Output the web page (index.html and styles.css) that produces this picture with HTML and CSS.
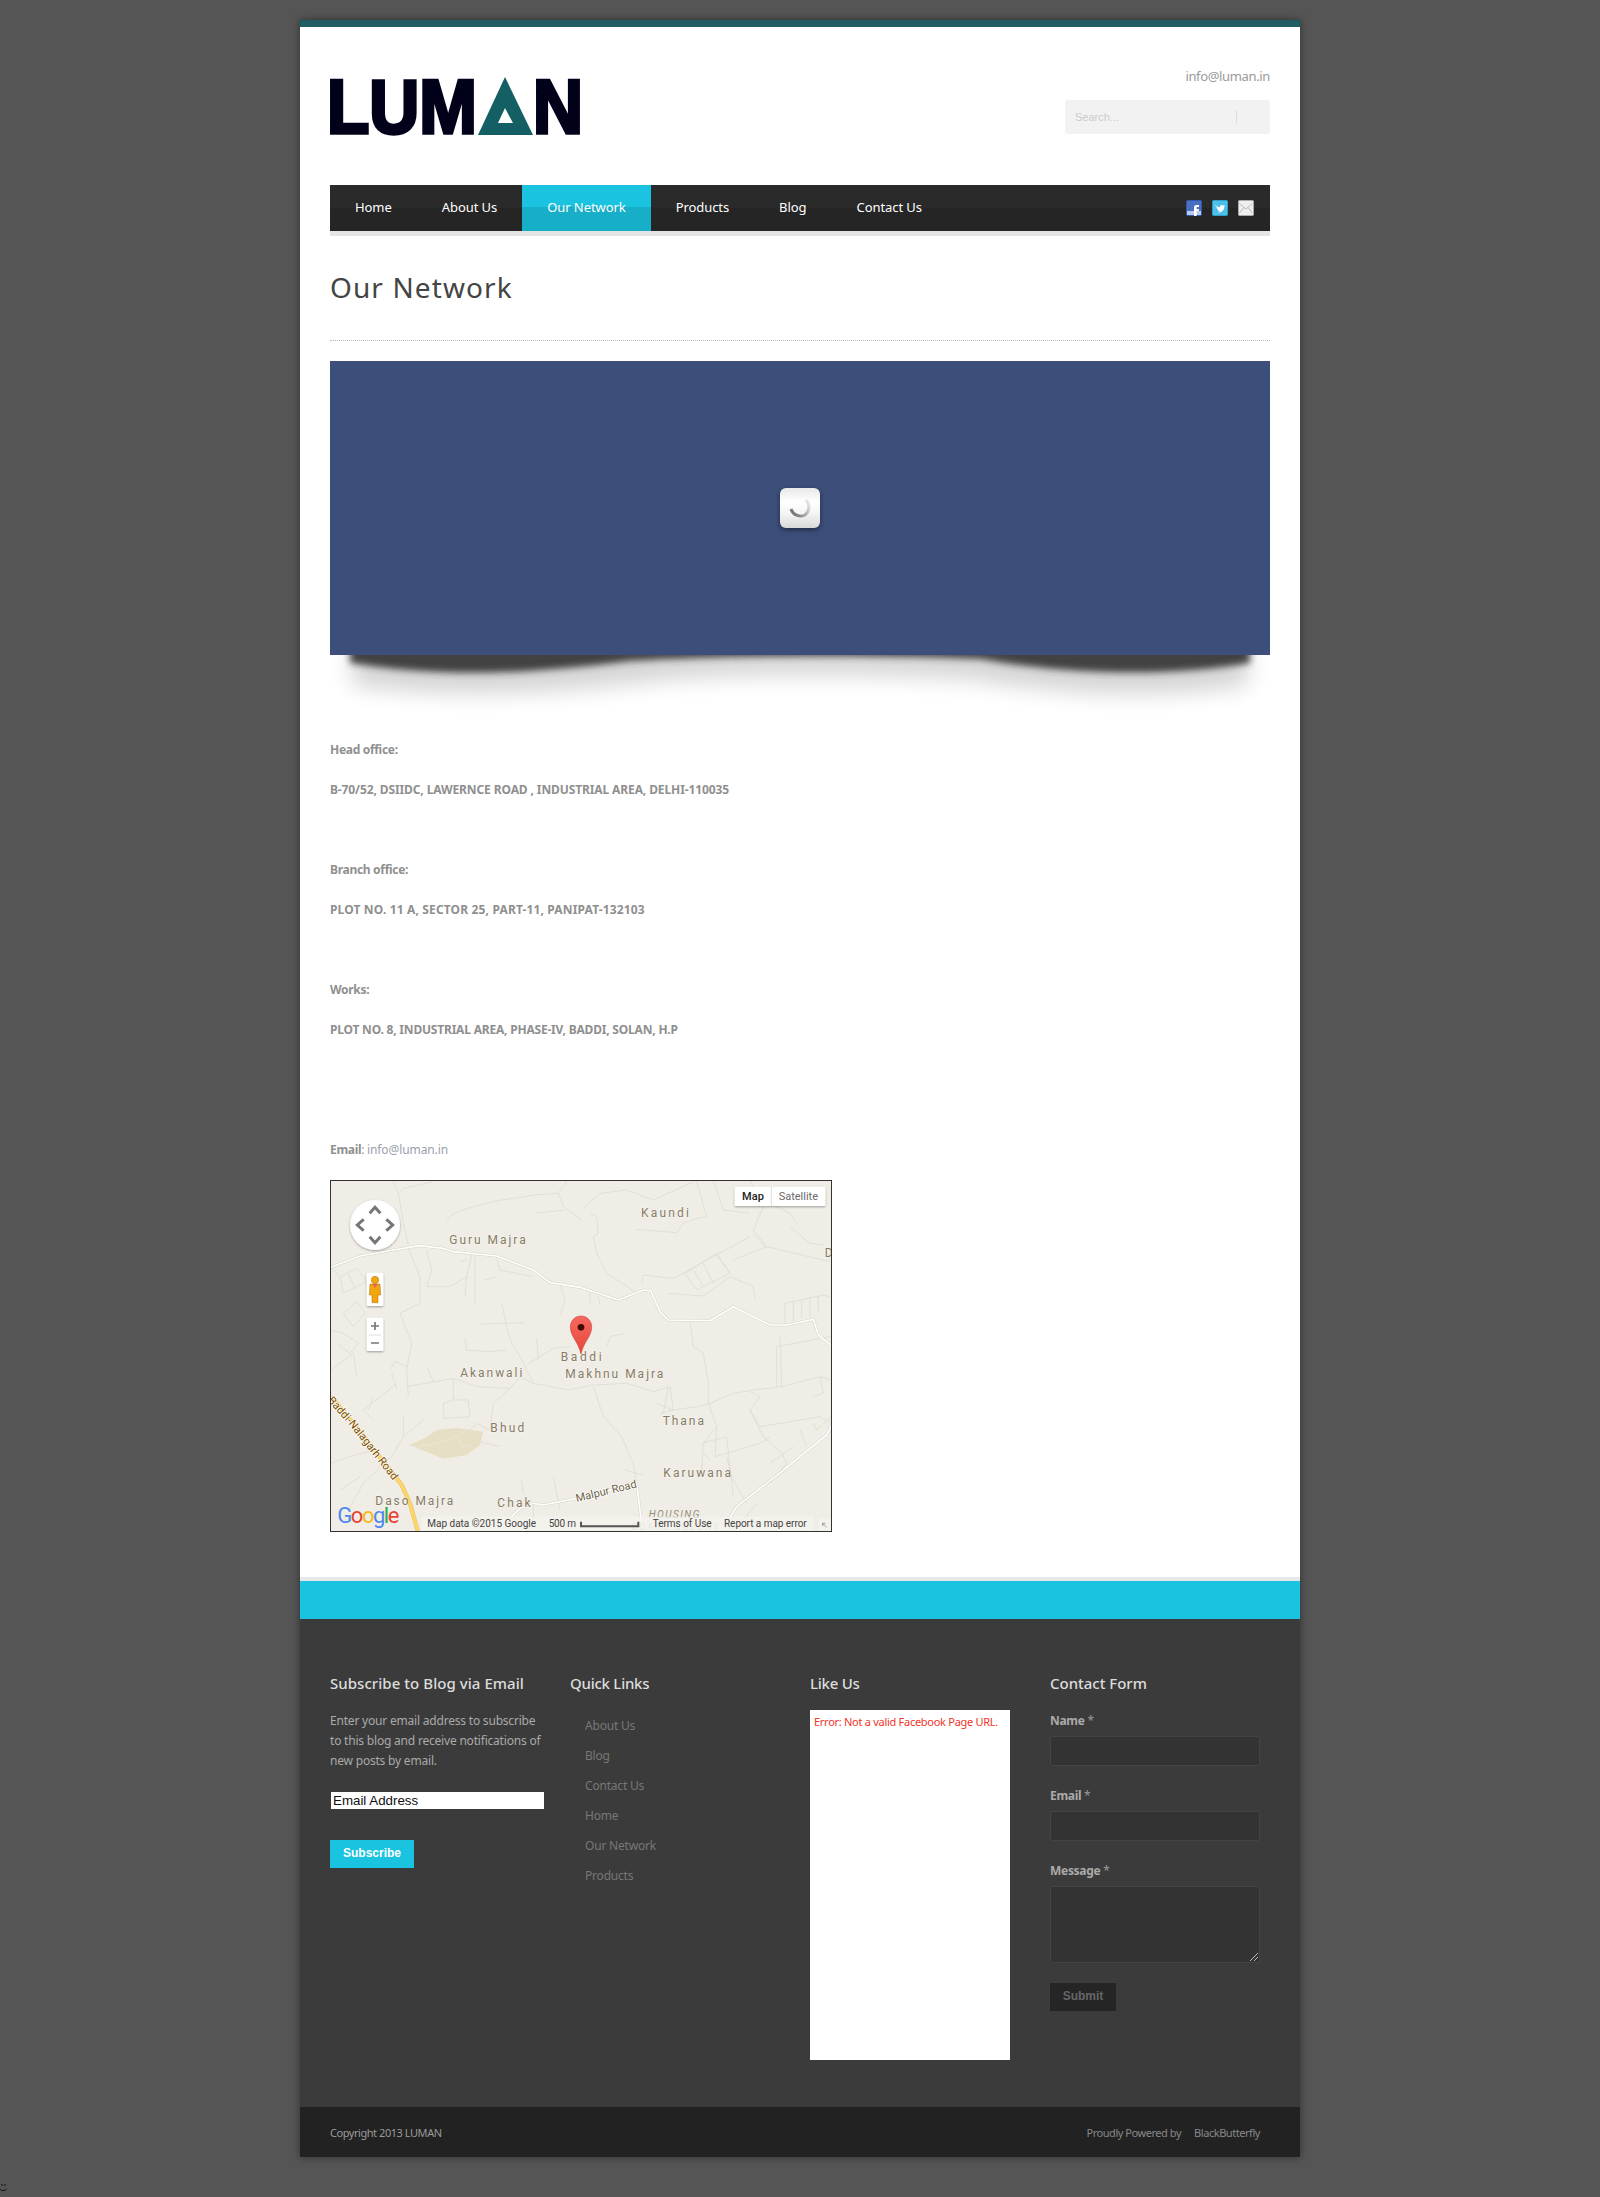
FILE: index.html
```html
<!DOCTYPE html>
<html lang="en">
<head>
<meta charset="utf-8">
<title>Our Network | LUMAN</title>
<link rel="stylesheet" href="styles.css">
</head>
<body>
<div class="page">
  <header class="head">
    <svg class="logo" width="250" height="60" viewBox="0 0 250 60" role="img" aria-label="LUMAN">
      <text class="logo-text" x="-3" y="56" textLength="150" lengthAdjust="spacingAndGlyphs">LUM</text>
      <polygon class="logo-a" points="175,0 148,58 203,58"/>
      <polygon class="logo-hole" points="175,31 168,46 183,46"/>
      <text class="logo-text" x="203" y="56" textLength="50" lengthAdjust="spacingAndGlyphs">N</text>
    </svg>
    <div class="head-right">
      <a class="head-mail">info@luman.in</a>
      <div class="search"><span class="search-ph">Search...</span><span class="search-div"></span></div>
    </div>
  </header>

  <nav class="nav">
    <ul class="menu">
      <li class="menu-item">Home</li>
      <li class="menu-item">About Us</li>
      <li class="menu-item active">Our Network</li>
      <li class="menu-item">Products</li>
      <li class="menu-item">Blog</li>
      <li class="menu-item">Contact Us</li>
    </ul>
    <div class="social">
      <svg width="16" height="16" viewBox="0 0 16 16"><rect x=".5" y=".5" width="15" height="15" rx="1" fill="#4a6fc0" stroke="#3558a8"/><rect x="1" y="11" width="14" height="4" fill="#b9c8ea"/><path d="M8 16V7.800c0-1.900 1-2.800 2.600-2.800H13v2h-1.400c-.7 0-1 .3-1 1V9H13l-.3 2h-2.100v5z" fill="#fff"/></svg>
      <svg width="16" height="16" viewBox="0 0 16 16"><rect x=".5" y=".5" width="15" height="15" rx="1" fill="#4cc0ea" stroke="#2f9fc8"/><path d="M3 4.500c1.500 1.800 3 2.600 5 2.700-.3-1.700 1.900-2.900 3.200-1.600l1.500-.5-.8 1.200 1.200-.2-1 1.100c0 3.300-3.400 6.100-6.900 4.900 1 0 1.900-.3 2.500-.9-1.100 0-1.800-.6-2.100-1.400h1C5.400 9.400 4.600 8.500 4.600 7.500l.9.200C4.200 6.800 3.200 5.700 3 4.500z" fill="#fff"/></svg>
      <svg width="16" height="16" viewBox="0 0 16 16"><rect x=".5" y=".5" width="15" height="15" rx="1" fill="#eee" stroke="#aaa"/><path d="M1.500 3.500 8 9l6.500-5.500M1.500 13 6 7.500M14.500 13 10 7.500" fill="none" stroke="#bbb"/></svg>
    </div>
  </nav>
  <div class="nav-strip"></div>

  <main class="main">
    <h1 class="title">Our Network</h1>
    <div class="slider">
      <div class="loader">
        <svg width="40" height="40" viewBox="0 0 40 40">
          <defs><linearGradient id="spin" x1="1" y1="0" x2="0" y2="0.6"><stop offset="0" stop-color="#eee"/><stop offset="1" stop-color="#777"/></linearGradient></defs>
          <path d="M26 12a10 10 0 0 1-1 15 10 10 0 0 1-14-6" fill="none" stroke="url(#spin)" stroke-width="3"/>
        </svg>
      </div>
    </div>
    <svg class="slider-shadow" width="940" height="85" viewBox="0 0 940 85" aria-hidden="true">
      <defs>
        <filter id="b1" x="-5%" y="-50%" width="110%" height="200%"><feGaussianBlur stdDeviation="3.500"/></filter>
        <filter id="b2" x="-5%" y="-100%" width="110%" height="300%"><feGaussianBlur stdDeviation="11"/></filter>
      </defs>
      <path d="M22 -10V30C130 44 230 38 340 24 430 18 530 18 640 24 740 40 830 44 918 30V-10Z" fill="#000" opacity=".17" filter="url(#b2)"/>
      <path d="M20 -10V8C110 22 190 20 300 6 400 0 550 0 650 4 740 20 840 22 920 8V-10Z" fill="#333" opacity=".9" filter="url(#b1)"/>
    </svg>
    <div class="content">
      <p class="line"><strong>Head office:</strong></p>
      <p class="line addr-a"><strong>B-70/52, DSIIDC, LAWERNCE ROAD , INDUSTRIAL AREA, DELHI-110035</strong></p>
      <p class="line gap"><strong>Branch office:</strong></p>
      <p class="line addr-b"><strong>PLOT NO. 11 A, SECTOR 25, PART-11, PANIPAT-132103</strong></p>
      <p class="line gap"><strong>Works:</strong></p>
      <p class="line addr-c"><strong>PLOT NO. 8, INDUSTRIAL AREA, PHASE-IV, BADDI, SOLAN, H.P</strong></p>
      <p class="line gap-lg"><strong>Email</strong>: <a class="link">info@luman.in</a></p>
    </div>

    <div class="map">
      <svg class="map-svg" width="500" height="350" viewBox="33 33 1500 1050" role="img" aria-label="Map of Baddi">
        <defs>
          <filter id="sh" x="-20%" y="-20%" width="140%" height="140%"><feDropShadow dx="0" dy="3" stdDeviation="3" flood-opacity=".35"/></filter>
          <linearGradient id="pin" x1="0" y1="0" x2="0" y2="1"><stop offset="0" stop-color="#f7685e"/><stop offset="1" stop-color="#e5473c"/></linearGradient>
          <path id="roadlabel" d="M22 692 92 770 238 956"/>
          <path id="malpur" d="M770 996 952 952"/>
        </defs>
        <rect x="33" y="33" width="1500" height="1050" fill="#efede5"/>
        <path class="park" d="M268 825 320 802 350 780 410 774 490 785 480 825 440 855 370 866 330 850Z"/>
        <path class="park-line" d="M270 830C330 830 400 810 440 780M415 800 425 830 450 825"/>
        <g class="minor">
          <path d="M220 33 235 70 250 160 265 225M340 35 250 55 235 70"/>
          <path d="M380 150C400 120 470 110 520 95 560 85 600 85 640 75L715 70 730 110 785 150M740 33 715 70M645 130 730 120"/>
          <path d="M810 130 830 140 835 190 820 200 830 250 860 310 945 365M790 115 840 70 920 60 1000 90 1125 33"/>
          <path d="M950 178 1070 188 1090 160 1130 145 1160 140 1130 33M1290 33 1330 110 1300 180 1340 230M1180 33 1210 120 1290 130M1350 100 1410 130 1430 160M1410 170 1470 220 1510 225"/>
          <path d="M1290 200 1060 325 970 315 965 340M1300 190 1340 235M1095 310 1130 360 1230 310 1190 250 1095 310M1120 300 1150 350M1150 280 1180 340M1190 255 1230 310M1045 370 1150 378 1230 320 1300 350 1305 385M1240 270 1340 230 1530 275"/>
          <path d="M1395 460V400L1510 375 1530 380M1420 455V395M1445 445V390M1470 440V382M1495 425V378"/>
          <path d="M33 292 60 320 70 370 140 335 110 295 60 320M85 310 105 355M265 235 300 320 300 400 240 430 275 520 260 600 265 680M155 370 140 370M70 430 110 395 135 430 100 470 70 430M33 480 70 490 115 520 90 550 50 520M320 240 335 300 320 350 390 350 440 320 455 255M440 320 435 380M420 275 440 270M495 330 530 320M465 255 465 400"/>
          <path d="M530 265 540 300 640 320M720 345 735 390 720 435M810 365 810 400M835 380 840 405M545 400 560 470 575 520 600 560 640 640 745 660 820 645 920 640 1000 665 1050 650 1060 720 1130 710 1170 700 1240 670 1300 660 1385 650 1500 620 1533 630M480 462 615 458M435 505 440 540 510 545 560 540M620 585 700 535 750 530M650 505 655 570M860 530 870 500 915 490M820 650 850 740 905 800 940 880 950 940M1110 455 1120 530 1150 550 1165 640 1165 700 1190 770 1185 860"/>
          <path d="M1370 650 1370 530 1533 500M1500 620 1510 670 1480 680M1380 500 1385 650M1290 665 1320 680 1290 720 1330 800 1385 850 1400 880 1350 940M1290 720 1320 770 1440 750 1500 740 1533 760M1190 770 1150 820 1145 900M1185 860 1320 820 1350 800M1145 820 1220 800 1240 980M1150 850 1170 870M1220 860 1235 920 1280 1000M1350 880 1420 830M1440 780 1460 830M1480 760 1490 780 1533 740M1310 1000 1270 1050"/>
          <path d="M33 600 100 550 110 620M210 600 225 575 265 590M215 610 230 660M320 590 340 635M260 650 400 625 470 650 570 655 600 620 640 640M400 625 400 690 370 700 372 745 450 740 445 690 400 690M570 655 520 700 510 780 470 760 440 790M540 830 480 815M33 880 90 860 160 840M230 640 130 720 160 750M250 740 250 800 215 860 130 940 85 1020M250 800 310 750M60 960 120 920M160 680 145 720"/>
          <path d="M700 920 720 1020M605 930 610 970M640 1000 640 1050M915 900 950 910 970 915M1010 700 1060 720 1020 730M1045 650 1030 730"/>
        </g>
        <g class="mainroad-edge">
          <path d="M33 292 120 258 220 240 298 227 370 235 400 245 530 258 640 300 690 338 780 352 895 390 970 360 992 362 1020 425 1045 450 1170 452 1240 410 1350 465 1400 465 1480 448 1495 495 1533 525"/>
          <path d="M1533 770 1520 795 1385 905 1250 1010 1225 1050"/>
          <path d="M560 1055 600 1015 640 1000 670 1005 770 985 950 940 965 1060"/>
        </g>
        <g class="mainroad">
          <path d="M33 292 120 258 220 240 298 227 370 235 400 245 530 258 640 300 690 338 780 352 895 390 970 360 992 362 1020 425 1045 450 1170 452 1240 410 1350 465 1400 465 1480 448 1495 495 1533 525"/>
          <path d="M1533 770 1520 795 1385 905 1250 1010 1225 1050"/>
          <path d="M560 1055 600 1015 640 1000 670 1005 770 985 950 940 965 1060"/>
        </g>
        <path class="yellow-edge" d="M33 680 100 760 245 945 270 1000 295 1090"/>
        <path class="yellow" d="M33 680 100 760 245 945 270 1000 295 1090"/>
        <text class="road-text"><textPath href="#roadlabel">Baddi-Nalagarh Road</textPath></text>
        <text class="road-text road-plain"><textPath href="#malpur">Malpur Road</textPath></text>

        <text class="place" x="963" y="140" textLength="144">Kaundi</text>
        <text class="place" x="388" y="223" textLength="229">Guru Majra</text>
        <text class="place" x="1514" y="262">D</text>
        <text class="place" x="421" y="620" textLength="186">Akanwali</text>
        <text class="place" x="722" y="573" textLength="123">Baddi</text>
        <text class="place" x="736" y="625" textLength="294">Makhnu Majra</text>
        <text class="place" x="511" y="785" textLength="102">Bhud</text>
        <text class="place" x="1028" y="764" textLength="124">Thana</text>
        <text class="place" x="1030" y="920" textLength="203">Karuwana</text>
        <text class="place" x="166" y="1004" textLength="234">Daso Majra</text>
        <text class="place" x="532" y="1010" textLength="100">Chak</text>
        <text class="housing" x="986" y="1043" textLength="152">HOUSING</text>
        <text class="housing-faint" x="935" y="1080" textLength="260">BOARD COLONY</text>

        <path class="pin" d="M783 552C775 515 751 500 751 471 751 452 765 438 783 438S815 452 815 471C815 500 791 515 783 552Z"/>
        <circle class="pin-dot" cx="783" cy="472" r="10"/>

        <circle class="ctl" cx="165" cy="165" r="75" filter="url(#sh)"/>
        <path class="chev" d="M149 130 165 112 181 130M131 148 112 165 131 182M199 148 218 165 199 182M149 200 165 218 181 200"/>
        <rect class="ctl" x="140" y="308" width="50" height="100" rx="4" filter="url(#sh)"/>
        <circle class="peg" cx="165" cy="330" r="11"/>
        <path class="peg" d="M150 342H180L182 375 174 375 174 398H156L156 375 148 375Z"/>
        <path class="peg-v" d="M156 342H174L165 354Z"/>
        <rect class="ctl" x="140" y="443" width="50" height="100" rx="4" filter="url(#sh)"/>
        <path class="zoom-line" d="M146 495H184"/>
        <path class="chev-thin" d="M153 468H177M165 456V480M153 519H177"/>

        <rect class="ctl" x="1244" y="50" width="272" height="58" rx="3" filter="url(#sh)"/>
        <path class="zoom-line" d="M1354 50V108"/>
        <text class="map-btn strong" x="1266" y="90" textLength="66">Map</text>
        <text class="map-btn" x="1376" y="89" textLength="118">Satellite</text>

        <rect class="attr-bg" x="305" y="1040" width="1175" height="43"/>
        <rect class="attr-bg" x="1495" y="1045" width="38" height="38"/>
        <text class="attr" x="322" y="1072" textLength="326">Map data ©2015 Google</text>
        <text class="attr" x="686" y="1072" textLength="82">500 m</text>
        <path class="scale" d="M783 1055V1069H955V1055"/>
        <text class="attr" x="998" y="1072" textLength="177">Terms of Use</text>
        <text class="attr" x="1212" y="1072" textLength="248">Report a map error</text>
        <path class="corner" d="M1520 1072 1508 1060M1508 1068V1060H1516"/>

        <text class="goog" x="52" y="1058" textLength="186"><tspan class="g-b">G</tspan><tspan class="g-r">o</tspan><tspan class="g-y">o</tspan><tspan class="g-b">g</tspan><tspan class="g-g">l</tspan><tspan class="g-r">e</tspan></text>
      </svg>
    </div>
  </main>

  <div class="band"></div>

  <footer class="foot">
    <section class="col">
      <h3 class="foot-h wide">Subscribe to Blog via Email</h3>
      <p class="foot-p">Enter your email address to subscribe<br>to this blog and receive notifications of<br>new posts by email.</p>
      <div class="sub-input">Email Address</div>
      <div class="sub-btn">Subscribe</div>
    </section>
    <section class="col">
      <h3 class="foot-h">Quick Links</h3>
      <ul class="links">
        <li>About Us</li>
        <li>Blog</li>
        <li>Contact Us</li>
        <li>Home</li>
        <li>Our Network</li>
        <li>Products</li>
      </ul>
    </section>
    <section class="col">
      <h3 class="foot-h">Like Us</h3>
      <div class="fb-box">Error: Not a valid Facebook Page URL.</div>
    </section>
    <section class="col">
      <h3 class="foot-h wider">Contact Form</h3>
      <div class="form">
        <label class="lbl">Name <span class="req">*</span></label>
        <div class="field"></div>
        <label class="lbl">Email <span class="req">*</span></label>
        <div class="field"></div>
        <label class="lbl">Message <span class="req">*</span></label>
        <div class="field area">
          <svg class="grip" width="8" height="8" viewBox="0 0 8 8"><path d="M0 8 8 0M4 8 8 4" stroke="#bbb" fill="none"/></svg>
        </div>
        <div class="submit">Submit</div>
      </div>
    </section>
  </footer>

  <div class="copy">
    <span class="copy-left">Copyright 2013 LUMAN</span>
    <span class="copy-right"><span>Proudly Powered by</span><span>BlackButterfly</span></span>
  </div>
</div>
<svg class="smiley" width="7" height="8" viewBox="0 0 7 8" aria-hidden="true"><path d="M2 0V2M5 0V2M0 5C1 7 5 7 6.500 5" fill="none" stroke="#111"/></svg>
</body>
</html>
```
FILE: styles.css
```css
* { box-sizing: border-box; }
html, body { margin: 0; padding: 0; }
body {
  background: #555;
  padding: 20px 0 40px;
  font-family: "Noto Sans", "Open Sans", sans-serif;
  font-size: 12px;
  color: #999;
  position: relative;
}
.smiley { position: absolute; left: 0; top: 2184px; display: block; }
.page {
  width: 1000px;
  margin: 0 auto;
  background: #fff;
  border-top: 7px solid #1f5c63;
  box-shadow: 0 0 8px rgba(0,0,0,.45);
}
.head {
  display: flex;
  justify-content: space-between;
  padding: 50px 30px 0;
  height: 158px;
}
.logo { display: block; overflow: visible; }
.logo-text { font-family: "Liberation Sans", sans-serif; font-weight: 700; font-size: 76px; fill: #01021a; stroke: #01021a; stroke-width: 3.500px; }
.logo-a { fill: #135f63; }
.logo-hole { fill: #fff; }
.head-right { display: flex; flex-direction: column; align-items: flex-end; margin-top: -11px; }
.head-mail { font-size: 13px; line-height: 20px; color: #999; font-family: "Noto Sans", sans-serif; letter-spacing: -.35px; }
.search {
  width: 205px; height: 34px; margin-top: 14px;
  background: #f2f2f2; border-radius: 3px;
  display: flex; align-items: center; justify-content: space-between;
  padding: 0 33px 0 10px;
}
.search-ph { font-family: "Liberation Sans", sans-serif; font-size: 11px; color: #ccc; }
.search-div { width: 1px; height: 14px; background: #ddd; }

.nav {
  margin: 0 30px; height: 46px;
  display: flex; justify-content: space-between; align-items: center;
  background: linear-gradient(#2a2a2a 50%, #252525 50%);
}
.menu { list-style: none; margin: 0; padding: 0; display: flex; height: 100%; }
.menu-item {
  padding: 0 25px; line-height: 45px;
  color: #fff; font-size: 13px; font-family: "Noto Sans", sans-serif; letter-spacing: -.07px;
}
.menu-item.active { background: linear-gradient(#1ac3df 48%, #17aec8 48%); }
.social { display: flex; gap: 10px; padding-right: 16px; }
.social svg { display: block; }
.nav-strip { margin: 0 30px; height: 5px; background: #e4e4e4; }

.main { padding: 0 30px; }
.title {
  margin: 0; height: 105px; padding-top: 31px;
  font-family: "Noto Sans", sans-serif; font-weight: 400; font-size: 28px; line-height: 40px;
  color: #444; letter-spacing: 1.100px;
  border-bottom: 1px dotted #bbb;
}
.slider {
  margin-top: 20px; height: 294px;
  background: #3c4f7a;
  display: flex; align-items: center; justify-content: center;
}
.loader {
  width: 40px; height: 40px; border-radius: 6px;
  background: linear-gradient(#e8e8e8, #fff 35%, #f4f4f4 65%, #d8d8d8);
  box-shadow: 0 2px 5px rgba(0,0,0,.45);
}
.loader svg { display: block; }
.slider-shadow { display: block; overflow: hidden; }

.content { margin-bottom: 1px; }
.line { margin: 0 0 20px; line-height: 20px; font-size: 12px; letter-spacing: -.3px; color: #999; }
.line strong { font-weight: 700; color: #8f8f8f; }
.addr-a { letter-spacing: -.11px; }
.addr-b { letter-spacing: .15px; }
.addr-c { letter-spacing: -.2px; }
.gap { margin-top: 60px; }
.gap-lg { margin-top: 100px; }
.link { color: #9aa0ad; letter-spacing: -.1px; }

.map { width: 502px; height: 352px; border: 1px solid #333; margin-bottom: 45px; }
.map-svg { display: block; }
.park { fill: #e6dfc6; }
.park-line { fill: none; stroke: #efede5; stroke-width: 2; opacity: .7; }
.minor path { fill: none; stroke: #dfdcd1; stroke-width: 2.500; stroke-linejoin: round; }
.mainroad-edge path { fill: none; stroke: #d6d2c6; stroke-width: 8; stroke-linejoin: round; }
.mainroad path { fill: none; stroke: #fff; stroke-width: 5; stroke-linejoin: round; }
.yellow-edge { fill: none; stroke: #e8c766; stroke-width: 13; }
.yellow { fill: none; stroke: #fcd56a; stroke-width: 10; }
.road-text { font-family: Roboto, sans-serif; font-size: 33px; fill: #7a4e06; stroke: #fff; stroke-width: 5px; paint-order: stroke; stroke-opacity: .85; }
.road-plain { fill: #6b5f45; }
.place { font-family: Roboto, sans-serif; font-size: 36px; fill: #857a63; stroke: #fff; stroke-width: 3px; paint-order: stroke; stroke-opacity: .6; }
.housing { font-family: Roboto, sans-serif; font-style: italic; font-size: 30px; fill: #9a8f7a; }
.housing-faint { font-family: Roboto, sans-serif; font-size: 26px; fill: #c4bfb0; }
.pin { fill: url(#pin); stroke: #c9352b; stroke-width: 1.500; }
.pin-dot { fill: #430a05; }
.ctl { fill: #fff; }
.chev { fill: none; stroke: #767676; stroke-width: 9; }
.chev-thin { fill: none; stroke: #767676; stroke-width: 5; }
.zoom-line { fill: none; stroke: #ccc; stroke-width: 2; }
.peg { fill: #f2a60d; stroke: #b06f08; stroke-width: 1.500; }
.peg-v { fill: #e8625a; }
.map-btn { font-family: Roboto, sans-serif; font-size: 33px; fill: #6a6a6a; }
.map-btn.strong { fill: #222; font-weight: 500; }
.attr-bg { fill: #f5f4ef; opacity: .72; }
.attr { font-family: Roboto, sans-serif; font-size: 30px; fill: #444; }
.scale { fill: none; stroke: #555; stroke-width: 6; }
.corner { fill: none; stroke: #777; stroke-width: 2; }
.goog { font-family: Roboto, sans-serif; font-weight: 400; font-size: 66px; }
.g-b { fill: #4d88ee; }
.g-r { fill: #e94235; }
.g-y { fill: #f7bb14; }
.g-g { fill: #35a853; }

.band { height: 42px; background: #1ac3df; border-top: 4px solid #e8e8e8; }
.foot {
  display: grid; grid-template-columns: repeat(4, 240px);
  padding: 50px 30px 46px;
  background: #3b3b3b;
  height: 488px;
}
.foot-h { margin: 0; font-family: "Noto Sans", sans-serif; font-weight: 500; font-size: 15px; line-height: 28px; color: #ddd; letter-spacing: -.25px; }
.foot-h.wide { letter-spacing: .05px; }
.foot-h.wider { letter-spacing: -.02px; }
.foot-p { margin: 14px 0 0; line-height: 20px; color: #aaa; letter-spacing: -.2px; white-space: nowrap; }
.sub-input {
  width: 213px; height: 17px; margin: 21px 0 0 1px;
  background: #fff; color: #111;
  font-family: "Liberation Sans", sans-serif; font-size: 13.330px; line-height: 17px; padding-left: 2px;
}
.sub-btn {
  width: 84px; height: 28px; margin-top: 31px;
  background: #1ac3df; color: #fff; text-align: center;
  font-family: "Liberation Sans", sans-serif; font-size: 12px; font-weight: 700; line-height: 27px;
}
.links { list-style: none; margin: 14px 0 0; padding: 0 0 0 15px; }
.links li { line-height: 30px; color: #777; letter-spacing: -.2px; }
.fb-box {
  width: 200px; height: 350px; margin-top: 13px;
  background: #fff; color: #f0352a;
  padding: 3px 4px; font-size: 11px; line-height: 17px; letter-spacing: -.28px; white-space: nowrap;
}
.form { display: flex; flex-direction: column; align-items: flex-start; }
.lbl { display: block; margin-top: 14px; font-weight: 700; font-size: 12px; line-height: 20px; color: #aaa; letter-spacing: -.3px; }
.req { color: #999; font-weight: 400; }
.field {
  width: 210px; height: 30px; margin-top: 5px; margin-bottom: 16px;
  background: #333; border: 1px solid #444; border-radius: 2px; position: relative;
}
.field + .lbl { margin-top: 0; padding-top: 4px; }
.area { height: 77px; margin-bottom: 20px; }
.grip { position: absolute; right: 1px; bottom: 1px; }
.submit {
  width: 66px; height: 28px; background: #252525; color: #666; text-align: center;
  font-family: "Liberation Sans", sans-serif; font-size: 12px; font-weight: 700; line-height: 27px;
}
.copy {
  height: 50px; background: #222;
  display: flex; justify-content: space-between; align-items: center;
  padding: 0 40px 0 30px;
  font-size: 11px; color: #9a9a9a; letter-spacing: -.45px;
}
.copy-right { display: flex; gap: 13px; color: #888; }
```
